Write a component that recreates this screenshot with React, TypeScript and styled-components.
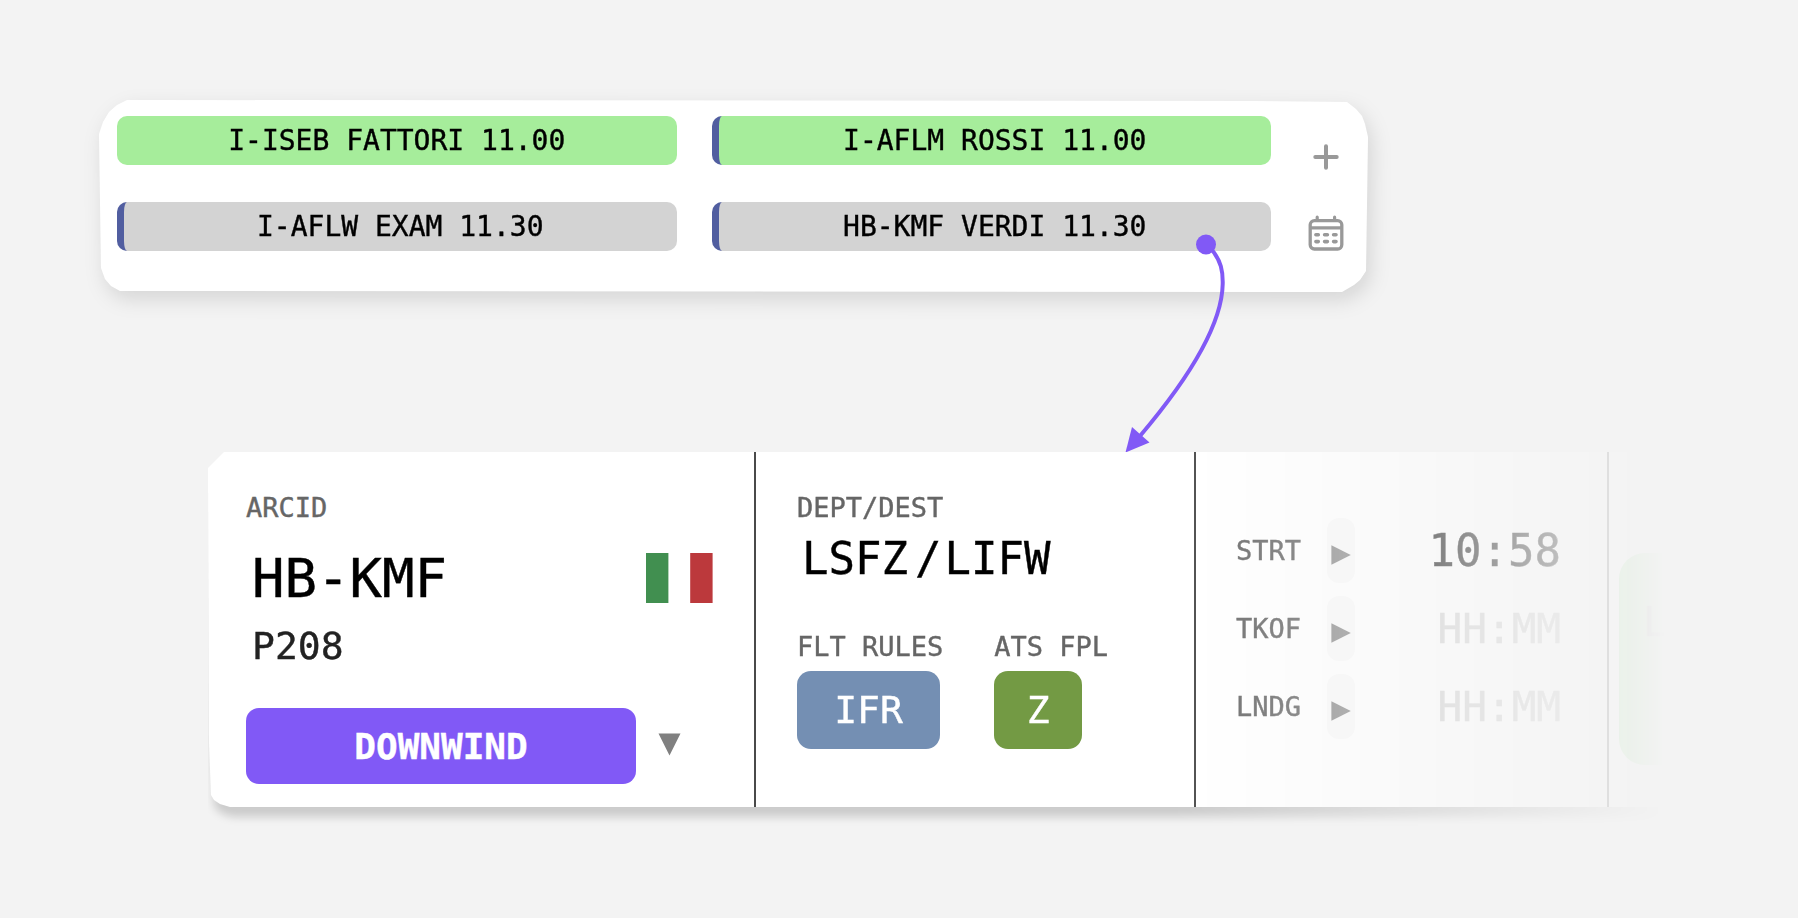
import React from 'react';
import styled, { createGlobalStyle } from 'styled-components';

const GlobalStyle = createGlobalStyle`
  *, *::before, *::after { box-sizing: border-box; }
  body {
    margin: 0;
    background: #f3f3f3;
    color: #000;
    font-family: "DejaVu Sans Mono", "Liberation Mono", monospace;
    -webkit-text-stroke: 0.4px currentColor;
  }
  button, input, select {
    margin: 0;
    padding: 0;
    border: 0;
    background: none;
    color: inherit;
    font: inherit;
  }
  button, select { cursor: pointer; }
`;

const Page = styled.main`
  display: flex;
  flex-direction: column;
  gap: 160px;
  padding: 100px 130px 80px 99px;
`;

const BoardScene = styled.section`
  position: relative;
  margin-right: 300px;
`;

const BoardShadow = styled.div`
  filter: drop-shadow(4px 8px 10px rgba(0, 0, 0, 0.12));
`;

const Board = styled.div`
  display: grid;
  grid-template-columns: minmax(0, 1fr) 36px;
  column-gap: 37px;
  align-items: start;
  height: 192px;
  padding: 16px 24px 16px 18px;
  background: #fff;
  clip-path: polygon(
    0 34px, 4px 22px, 10px 12px, 18px 5px, 28px 0,
    calc(100% - 118px) 1px, calc(100% - 21px) 2px, calc(100% - 12px) 9px,
    calc(100% - 6px) 16px, calc(100% - 3px) 24px, 100% 37px,
    calc(100% - 2px) 171px, calc(100% - 8px) 180px, calc(100% - 14px) 185px, calc(100% - 26px) 100%,
    102px 191px, 21px 191px, 12px 186px, 6px 179px, 2px 168px
  );
`;

const Strips = styled.div`
  display: grid;
  grid-template-columns: repeat(2, minmax(0, 1fr));
  gap: 37px 35px;
`;

const Strip = styled.button<{ $active?: boolean; $marked?: boolean }>`
  height: 49px;
  padding-top: 1px;
  border-left: ${(p) => (p.$marked ? '7px solid #515ea0' : '0')};
  border-radius: 10px;
  background: ${(p) => (p.$active ? '#a6ed9b' : '#d3d3d3')};
  font-size: 28px;
  line-height: 32px;
  white-space: nowrap;
`;

const Tools = styled.div`
  display: flex;
  flex-direction: column;
  align-items: center;
  gap: 38px;
  padding-top: 22px;
`;

const ToolButton = styled.button`
  display: flex;
  align-items: center;
  justify-content: center;
  width: 36px;
  height: 38px;
  color: #999;
`;

const Connector = styled.svg`
  position: absolute;
  top: 132px;
  right: 138px;
  pointer-events: none;
`;

const DetailFade = styled.section`
  margin-left: 109px;
  padding-bottom: 24px;
  mask-image: linear-gradient(to right, #000 66%, transparent calc(100% - 3px));
`;

const DetailShadow = styled.div`
  filter: drop-shadow(3px 10px 4px rgba(0, 0, 0, 0.16));
`;

const Detail = styled.div`
  display: grid;
  grid-template-columns: minmax(0, 548fr) minmax(0, 440fr) minmax(0, 413fr) minmax(0, 59fr);
  height: 355px;
  background: #fff;
  clip-path: polygon(
    16px 0, 100% 0, 100% 100%, 22px 100%, 12px 352px, 6px 348px, 3px 343px, 1px 290px, 0 16px
  );
`;

const Cell = styled.div`
  display: flex;
  flex-direction: column;
  align-items: stretch;
  border-right: 2px solid #4a4a4a;
`;

const IdentityCell = styled(Cell)`
  padding: 38px 41px 0 38px;
`;

const RouteCell = styled(Cell)`
  padding: 38px 40px 0 41px;
`;

const TimesCell = styled(Cell)`
  gap: 13px;
  padding: 66px 46px 0 40px;
`;

const NextCell = styled.div`
  padding: 101px 0 0 10px;
  overflow: hidden;
`;

const Label = styled.label`
  color: #666;
  font-size: 27px;
  line-height: 36px;
  white-space: nowrap;
`;

const CallsignRow = styled.div`
  display: flex;
  align-items: center;
  justify-content: space-between;
  height: 72px;
  padding-left: 6px;
  margin-top: 16px;
`;

const CallsignInput = styled.input`
  width: 240px;
  height: 64px;
  font-size: 54px;
`;

const TypeInput = styled.input`
  width: 240px;
  height: 46px;
  margin: 9px 0 0 6px;
  color: #222;
  font-size: 38px;
`;

const StatusRow = styled.div`
  display: flex;
  align-items: center;
  gap: 22px;
  margin-top: 39px;
`;

const StatusButton = styled.button`
  flex: 0 1 390px;
  height: 76px;
  border-radius: 13px;
  background: #8159f6;
  color: #fff;
  font-size: 36px;
  font-weight: 700;
`;

const RouteRow = styled.div`
  display: flex;
  align-items: center;
  gap: 3px;
  height: 52px;
  margin: 7px 0 0 5px;
  font-size: 44px;
  line-height: 52px;
`;

const AirportInput = styled.input`
  width: 110px;
  height: 52px;
`;

const Flags = styled.div`
  display: flex;
  gap: 51px;
  margin-top: 44px;
`;

const FlagField = styled.div`
  display: flex;
  flex-direction: column;
  align-items: flex-start;
  gap: 6px;
`;

const Badge = styled.button<{ $tone: string; $width: number }>`
  width: ${(p) => p.$width}px;
  height: 78px;
  border-radius: 14px;
  background: ${(p) => p.$tone};
  color: #fff;
  font-size: 38px;
`;

const TimeRow = styled.div`
  display: grid;
  grid-template-columns: 91px 28px minmax(0, 1fr);
  align-items: center;
  height: 65px;
`;

const PlayButton = styled.button`
  display: flex;
  align-items: center;
  justify-content: center;
  height: 65px;
  padding-top: 8px;
  border-radius: 12px;
  background: #f9f9f9;
  color: #888;
`;

const TimeInput = styled.input<{ $large?: boolean }>`
  width: 100%;
  height: 56px;
  font-size: ${(p) => (p.$large ? 44 : 41)}px;
  text-align: right;
  &::placeholder { color: #cfcfcf; opacity: 1; }
`;

const LandButton = styled.button`
  width: 180px;
  height: 212px;
  padding: 0 0 74px 24px;
  border-radius: 26px;
  background: #98e492;
  color: #555;
  font-size: 41px;
  text-align: left;
`;

const PlusIcon = () => (
  <svg width="26" height="26" viewBox="0 0 26 26" fill="none" stroke="currentColor" strokeWidth="4" strokeLinecap="round" aria-hidden="true">
    <path d="M13 2.3V23.7M2.3 13H23.7" />
  </svg>
);

const CalendarIcon = () => (
  <svg width="36" height="36" viewBox="0 0 36 36" fill="none" stroke="currentColor" strokeLinecap="round" aria-hidden="true">
    <rect x="2.2" y="5.6" width="31.6" height="28.4" rx="4.2" strokeWidth="3.3" />
    <path d="M2.5 12.9H33.5" strokeWidth="3.4" strokeLinecap="butt" />
    <path d="M9.2 2.2V5M26.6 2.2V5" strokeWidth="3.2" />
    <path d="M7.9 19.8H10.3M16.6 19.8H19.4M25.6 19.8H28M7.9 26.6H10.3M16.6 26.6H19.4M25.6 26.6H28" strokeWidth="3.6" />
  </svg>
);

const ItalianFlag = () => (
  <svg width="67" height="50" viewBox="0 0 67 50" role="img" aria-label="Italy">
    <rect width="67" height="50" fill="#fff" />
    <rect width="22.4" height="50" fill="#418f50" />
    <rect x="44.2" width="22.4" height="50" fill="#bc393c" />
  </svg>
);

const DownTriangle = () => (
  <svg width="23" height="23" viewBox="0 0 23 23" aria-hidden="true">
    <path d="M0.5 0.5H22.5L11.5 22.5Z" fill="#808080" />
  </svg>
);

const PlayTriangle = () => (
  <svg width="20" height="20" viewBox="0 0 20 20" aria-hidden="true">
    <path d="M0.4 0.3V19.7L19.8 10Z" fill="currentColor" />
  </svg>
);

const strips = [
  { text: 'I-ISEB FATTORI 11.00', active: true, marked: false },
  { text: 'I-AFLM ROSSI 11.00', active: true, marked: true },
  { text: 'I-AFLW EXAM 11.30', active: false, marked: true },
  { text: 'HB-KMF VERDI 11.30', active: false, marked: true },
];

const times = [
  { id: 'strt', label: 'STRT', value: '10:58' },
  { id: 'tkof', label: 'TKOF', value: '' },
  { id: 'lndg', label: 'LNDG', value: '' },
];

export default function App() {
  return (
    <>
      <GlobalStyle />
      <Page>
        <BoardScene>
          <BoardShadow>
            <Board>
              <Strips>
                {strips.map((s) => (
                  <Strip key={s.text} type="button" $active={s.active} $marked={s.marked}>
                    {s.text}
                  </Strip>
                ))}
              </Strips>
              <Tools>
                <ToolButton type="button" aria-label="Add flight"><PlusIcon /></ToolButton>
                <ToolButton type="button" aria-label="Open calendar"><CalendarIcon /></ToolButton>
              </Tools>
            </Board>
          </BoardShadow>
          <Connector width="110" height="222" viewBox="0 0 110 222" aria-hidden="true">
            <circle cx="86" cy="12.5" r="10" fill="#8159f6" />
            <path d="M92 18C101 29 103 39 102.7 52C102 92 70 145 20 204" fill="none" stroke="#8159f6" strokeWidth="4" />
            <path d="M5.5 220.5L12 195L29.5 210.5Z" fill="#8159f6" />
          </Connector>
        </BoardScene>

        <DetailFade>
          <DetailShadow>
            <Detail>
              <IdentityCell>
                <Label htmlFor="arcid">ARCID</Label>
                <CallsignRow>
                  <CallsignInput id="arcid" defaultValue="HB-KMF" />
                  <ItalianFlag />
                </CallsignRow>
                <TypeInput aria-label="Aircraft type" defaultValue="P208" />
                <StatusRow>
                  <StatusButton type="button">DOWNWIND</StatusButton>
                  <button type="button" aria-label="Choose status"><DownTriangle /></button>
                </StatusRow>
              </IdentityCell>

              <RouteCell>
                <Label htmlFor="dept">DEPT/DEST</Label>
                <RouteRow>
                  <AirportInput id="dept" defaultValue="LSFZ" />
                  <span>/</span>
                  <AirportInput aria-label="Destination" defaultValue="LIFW" />
                </RouteRow>
                <Flags>
                  <FlagField>
                    <Label htmlFor="rules">FLT RULES</Label>
                    <Badge id="rules" type="button" $tone="#748fb3" $width={143}>IFR</Badge>
                  </FlagField>
                  <FlagField>
                    <Label htmlFor="fpl">ATS FPL</Label>
                    <Badge id="fpl" type="button" $tone="#739a44" $width={88}>Z</Badge>
                  </FlagField>
                </Flags>
              </RouteCell>

              <TimesCell>
                {times.map((t) => (
                  <TimeRow key={t.id}>
                    <Label htmlFor={t.id}>{t.label}</Label>
                    <PlayButton type="button" aria-label={`Set ${t.label} time`}><PlayTriangle /></PlayButton>
                    <TimeInput id={t.id} defaultValue={t.value} placeholder="HH:MM" $large={t.value !== ''} />
                  </TimeRow>
                ))}
              </TimesCell>

              <NextCell>
                <LandButton type="button">L</LandButton>
              </NextCell>
            </Detail>
          </DetailShadow>
        </DetailFade>
      </Page>
    </>
  );
}
